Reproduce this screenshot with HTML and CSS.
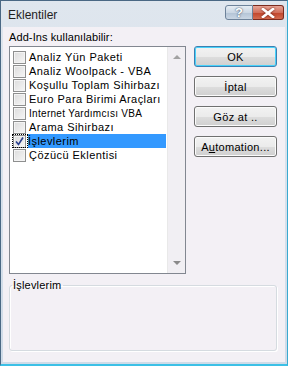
FILE: index.html
```html
<!DOCTYPE html>
<html lang="tr">

<head>
  <meta charset="UTF-8" />
  <title>Eklentiler</title>
  <link rel="stylesheet" href="styles.css">
</head>

<body>
  <div class="window">
    <div class="titlebar">
      <span class="title">Eklentiler</span>
      <div class="caption-buttons">
        <span class="cap help">?</span>
        <span class="cap close">
          <svg width="14" height="10" viewBox="0 0 14 10">
            <path d="M2 1 L12 9 M12 1 L2 9" stroke="#ffffff" stroke-width="2.6" stroke-linecap="square" />
          </svg>
        </span>
      </div>
    </div>

    <div class="client">
      <div class="main">
        <div class="left">
          <div class="label">Add-Ins kullanılabilir:</div>
          <div class="listbox">
            <ul class="items">
              <li><span class="check"></span><span class="text">Analiz Yün Paketi</span></li>
              <li><span class="check"></span><span class="text">Analiz Woolpack - VBA</span></li>
              <li><span class="check"></span><span class="text">Koşullu Toplam Sihirbazı</span></li>
              <li><span class="check"></span><span class="text">Euro Para Birimi Araçları</span></li>
              <li><span class="check"></span><span class="text small">Internet Yardımcısı VBA</span></li>
              <li><span class="check"></span><span class="text">Arama Sihirbazı</span></li>
              <li class="selected">
                <span class="focus"><span class="check checked">
                  <svg width="11" height="11" viewBox="0 0 11 11">
                    <path d="M2 5.5 L4.5 8.5 L9 1.5" fill="none" stroke="#2b3f8c" stroke-width="1.6" />
                  </svg>
                </span></span>
                <span class="text">İşlevlerim</span>
              </li>
              <li><span class="check"></span><span class="text">Çözücü Eklentisi</span></li>
            </ul>
            <div class="scrollbar">
              <span class="arrow up"></span>
              <span class="arrow down"></span>
            </div>
          </div>
        </div>

        <div class="buttons">
          <button class="default">OK</button>
          <button>İptal</button>
          <button>Göz at ..</button>
          <button>A<u>u</u>tomation...</button>
        </div>
      </div>

      <fieldset class="group">
        <legend>İşlevlerim</legend>
      </fieldset>
    </div>
  </div>
</body>

</html>
```

FILE: styles.css
```css
body {
  margin: 0;
  padding: 0;
  background-color: #ffffff;
  font-family: 'Liberation Sans', Arial, sans-serif;
  font-size: 11px;
  color: #000000;
}

.window {
  width: 288px;
  height: 366px;
  box-sizing: border-box;
  display: flex;
  flex-direction: column;
  border: 1px solid #4a6884;
  border-right-color: #3aa9d0;
  border-bottom: 2px solid #3cc0e6;
  background: linear-gradient(180deg, #dfe6ee, #cfdbe8);
  padding: 0 2px 2px 2px;
}

.titlebar {
  height: 26px;
  display: flex;
  align-items: flex-start;
  justify-content: space-between;
  flex-shrink: 0;
}

.title {
  font-size: 12px;
  margin: 7px 0 0 5px;
  color: #1e1e1e;
}

.caption-buttons {
  display: flex;
  margin-top: 4px;
  margin-right: 1px;
}

.cap {
  height: 15px;
  display: flex;
  align-items: center;
  justify-content: center;
  border: 1px solid #6d829a;
  box-sizing: border-box;
}

.help {
  width: 28px;
  border-radius: 3px 0 0 3px;
  background: linear-gradient(180deg, #e6edf4 0%, #cbd7e4 50%, #b3c3d5 51%, #c9d6e4 100%);
  color: #ffffff;
  font-weight: bold;
  font-size: 13px;
  text-shadow: 0 0 2px #4e6178, 0 0 1px #4e6178;
}

.close {
  width: 31px;
  border-radius: 0 3px 3px 0;
  border-color: #7a2a1e;
  border-left: none;
  background: linear-gradient(180deg, #e8a597 0%, #d2705c 50%, #c0442b 51%, #d46b4f 100%);
}

.close svg {
  filter: drop-shadow(0 0 1px #6b1d12);
}

.client {
  flex: 1;
  display: flex;
  flex-direction: column;
  background-color: #f3f0f5;
  padding: 4px 7px 0 6px;
}

.main {
  display: flex;
  gap: 8px;
}

.left {
  display: flex;
  flex-direction: column;
}

.label {
  height: 15px;
  line-height: 13px;
  letter-spacing: 0.1px;
}

.listbox {
  width: 177px;
  height: 228px;
  box-sizing: border-box;
  border: 1px solid #828790;
  background-color: #ffffff;
  display: flex;
}

.items {
  list-style: none;
  margin: 0;
  padding: 3px 0 0 2px;
  flex: 1;
}

.items li {
  height: 14px;
  display: flex;
  align-items: center;
}

.check {
  width: 13px;
  height: 13px;
  box-sizing: border-box;
  border: 1px solid #8e8f8f;
  background: linear-gradient(135deg, #dcdcdc, #f6f6f6);
  box-shadow: inset 0 0 0 1px #f4f4f4;
  margin: 0 3px 0 1px;
  display: flex;
  align-items: center;
  justify-content: center;
  flex-shrink: 0;
}

.focus {
  outline: 1px dotted #000000;
  outline-offset: -1px;
  display: flex;
  padding: 0 1px 0 0;
  height: 14px;
  align-items: center;
}

.focus .check {
  margin-right: 1px;
}

.text {
  white-space: nowrap;
  letter-spacing: 0.45px;
}

.text.small {
  font-size: 10px;
  letter-spacing: 0.3px;
}

.selected .text {
  background-color: #3399ff;
  color: #000000;
  flex: 1;
  height: 14px;
  line-height: 14px;
  margin-right: 1px;
}

.scrollbar {
  width: 17px;
  background-color: #f1eff3;
  border-left: 1px solid #e9e9e9;
  display: flex;
  flex-direction: column;
  justify-content: space-between;
  align-items: center;
  padding: 8px 0 8px 0;
}

.arrow {
  width: 0;
  height: 0;
  border-left: 4px solid transparent;
  border-right: 4px solid transparent;
}

.arrow.up {
  border-bottom: 4px solid #a2a2a2;
}

.arrow.down {
  border-top: 4px solid #8a8a8a;
}

.buttons {
  display: flex;
  flex-direction: column;
  gap: 9px;
  padding-top: 15px;
}

button {
  width: 83px;
  height: 21px;
  font-family: 'Liberation Sans', Arial, sans-serif;
  font-size: 11px;
  letter-spacing: 0.3px;
  color: #000000;
  border: 1px solid #707070;
  border-radius: 3px;
  background: linear-gradient(180deg, #f2f2f2 0%, #ebebeb 50%, #dddddd 51%, #cfcfcf 100%);
  box-shadow: inset 0 0 0 1px #fbfbfb;
  padding: 0;
}

button.default {
  border-color: #3c7fb1;
  box-shadow: inset 0 0 0 1px #48d2fb;
}

.group {
  margin: 5px 1px 0 0;
  height: 72px;
  box-sizing: border-box;
  border: 1px solid #d5dbe0;
  border-radius: 3px;
  box-shadow: 1px 1px 0 #ffffff, inset 1px 1px 0 #ffffff;
  padding: 0;
}

.group legend {
  margin-left: 2px;
  padding: 0 2px 0 1px;
  font-size: 11px;
  letter-spacing: 0.2px;
}
```
